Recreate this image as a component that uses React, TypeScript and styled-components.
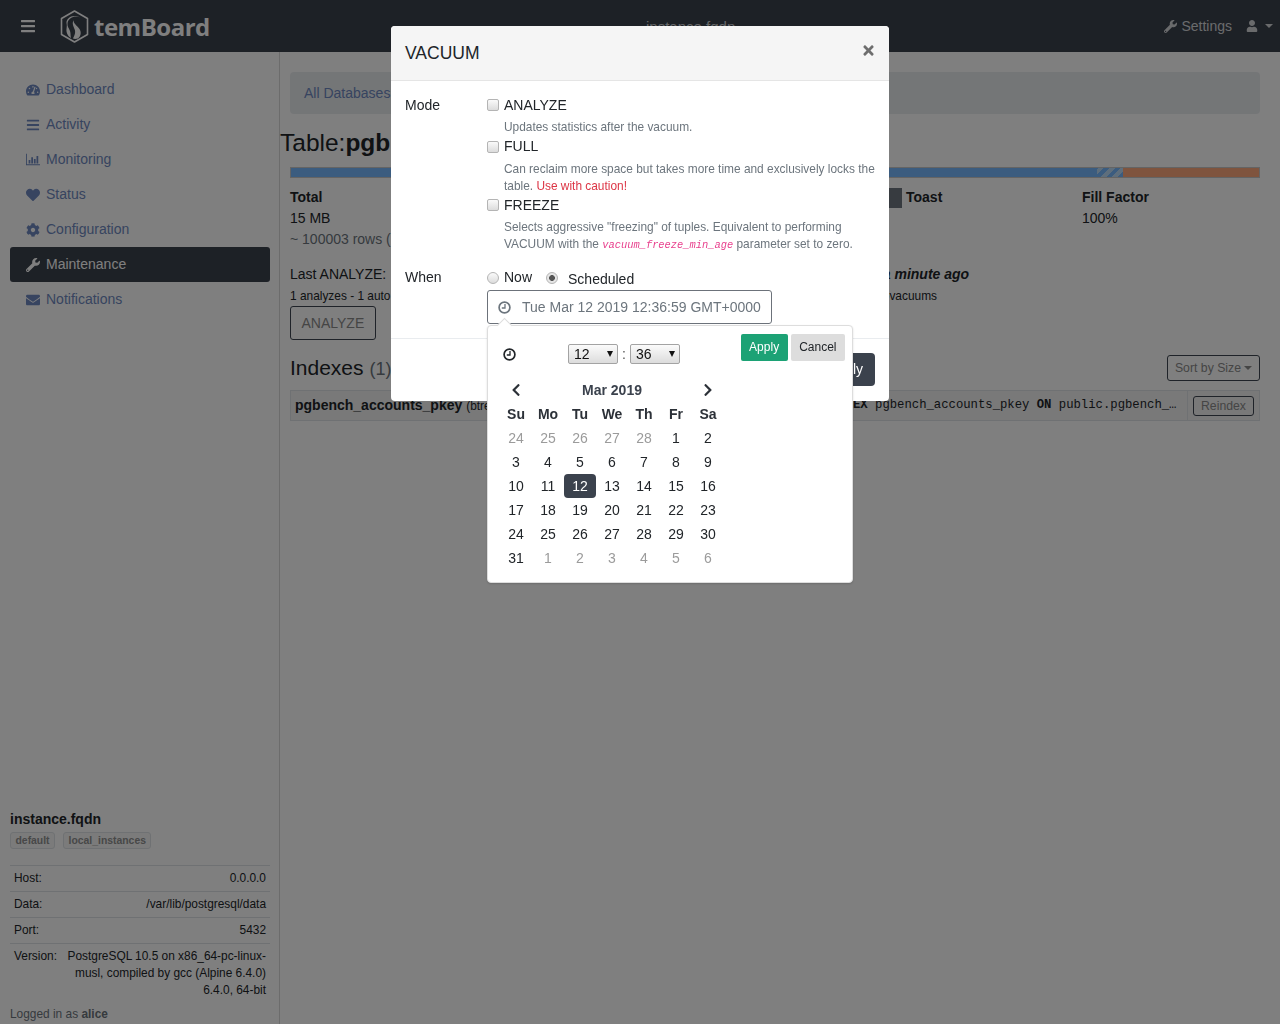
import React from 'react';
import styled, { createGlobalStyle } from 'styled-components';
import {
  FaBars,
  FaChevronLeft,
  FaChevronRight,
  FaCog,
  FaEnvelope,
  FaHeart,
  FaTachometerAlt,
  FaTimes,
  FaUser,
  FaWrench,
} from 'react-icons/fa';

const GlobalStyle = createGlobalStyle`
  html, body {
    margin: 0;
    padding: 0;
    background: #fff;
  }
  body {
    font-family: "Liberation Sans", Arial, sans-serif;
    font-size: 14px;
    line-height: 21px;
    color: #212529;
    overflow: hidden;
  }
  * {
    box-sizing: border-box;
  }
`;

const Page = styled.div`
  width: 1280px;
  height: 1024px;
  overflow: hidden;
  display: flex;
  flex-direction: column;
`;

const TopBar = styled.header`
  flex: 0 0 52px;
  display: flex;
  align-items: center;
  padding: 0 7px 0 20px;
  background: #3b424d;
  color: #fff;
`;

const Burger = styled.span`
  display: flex;
  font-size: 16px;
  width: 40px;
`;

const Brand = styled.span`
  display: flex;
  align-items: center;
  gap: 5px;
  width: 150px;
  font-family: "Open Sans", sans-serif;
  font-weight: 700;
  font-size: 24px;
  letter-spacing: -0.5px;
`;

const BarCenter = styled.span`
  margin-left: 436px;
  font-size: 15px;
  color: #c9ccd0;
`;

const BarRight = styled.div`
  margin-left: auto;
  display: flex;
  align-items: center;
  color: #d4d6d9;
`;

const SettingsLink = styled.span`
  display: flex;
  align-items: center;
  gap: 4px;
  margin-right: 14px;
`;

const Caret = styled.i<{ $tight?: boolean }>`
  display: inline-block;
  width: 0;
  height: 0;
  margin-left: ${(p) => (p.$tight ? '3px' : '7px')};
  border-top: 4px solid currentColor;
  border-left: 4px solid transparent;
  border-right: 4px solid transparent;
`;

const Columns = styled.div`
  flex: 1;
  display: flex;
  min-height: 0;
`;

const Sidebar = styled.aside`
  flex: 0 0 280px;
  display: flex;
  flex-direction: column;
  padding: 20px 9px 0 10px;
  border-right: 1px solid #d8d8d8;
`;

const NavItem = styled.a<{ $active?: boolean }>`
  display: flex;
  align-items: center;
  height: 35px;
  padding-left: 16px;
  border-radius: 3px;
  color: ${(p) => (p.$active ? '#fff' : '#6e88c0')};
  background: ${(p) => (p.$active ? '#3b424d' : 'transparent')};
`;

const NavIcon = styled.span`
  display: flex;
  justify-content: center;
  width: 14px;
  margin-right: 6px;
  font-size: 14px;
`;

const InstanceBlock = styled.div`
  margin-top: auto;
`;

const InstanceName = styled.div`
  font-weight: 700;
`;

const Badges = styled.div`
  display: flex;
  gap: 8px;
  margin: 2px 0 16px;
`;

const Badge = styled.span`
  padding: 0 4.5px;
  height: 17px;
  line-height: 16px;
  border: 1px solid #dee2e6;
  border-radius: 3px;
  font-size: 10.4px;
  font-weight: 700;
  color: #909090;
  background: #f6f6f6;
`;

const InfoRow = styled.div`
  display: flex;
  justify-content: space-between;
  gap: 10px;
  padding: 4px;
  border-top: 1px solid #dee2e6;
  font-size: 11.9px;
  line-height: 17px;
`;

const InfoLabel = styled.span`
  flex: none;
`;

const InfoValue = styled.span`
  text-align: right;
`;

const LoggedIn = styled.div`
  height: 21px;
  padding-top: 2.5px;
  font-size: 11.9px;
  line-height: 17px;
  color: #6c757d;
`;

const Main = styled.main`
  flex: 1;
  min-width: 0;
  padding: 20px 20px 0 10px;
`;

const Crumb = styled.div`
  height: 42px;
  display: flex;
  align-items: center;
  padding: 0 14px;
  border-radius: 4px;
  background: #e9ecef;
  color: #6e88c0;
`;

const Title = styled.h1`
  margin: 14px 0 10px -10px;
  font-size: 24.5px;
  line-height: 29px;
  font-weight: 400;
  white-space: nowrap;
`;

const SizeBar = styled.div`
  display: flex;
  height: 11px;
  border: 1px solid #c8c8c8;
  margin-bottom: 9px;
`;

const BarPart = styled.div<{ $w: number; $kind: 'heap' | 'hatch' | 'toast' }>`
  width: ${(p) => p.$w}px;
  background: ${(p) =>
    p.$kind === 'heap'
      ? '#76b8ff'
      : p.$kind === 'toast'
        ? '#ffa87c'
        : 'repeating-linear-gradient(-45deg, #76b8ff 0 4px, #bcdcf8 4px 8px)'};
`;

const Stats = styled.div`
  display: grid;
  grid-template-columns: repeat(5, 198px);
  margin: 0 -10px 14px;
`;

const Stat = styled.div<{ $col?: number }>`
  grid-column: ${(p) => p.$col ?? 'auto'};
  padding-left: 10px;
`;

const StatHead = styled.div`
  display: flex;
  align-items: center;
  font-weight: 700;
`;

const Swatch = styled.span`
  width: 18px;
  height: 20px;
  margin-right: 4px;
  background: #6f7680;
`;

const Muted = styled.div`
  color: #6c757d;
  white-space: nowrap;
`;

const Maint = styled.div`
  display: grid;
  grid-template-columns: 495px 1fr;
  height: 91px;
`;

const Tiny = styled.div`
  font-size: 11.9px;
  line-height: 17px;
  margin: 3px 0 1px;
`;

const OutlineBtn = styled.span<{ $small?: boolean }>`
  display: inline-flex;
  align-items: center;
  border: 1px solid #3f4652;
  border-radius: 3px;
  color: #8a8a8a;
  height: ${(p) => (p.$small ? '26px' : '34px')};
  padding: 0 ${(p) => (p.$small ? '7px' : '10.5px')};
  font-size: ${(p) => (p.$small ? '12.25px' : '14px')};
`;

const IndexHead = styled.div`
  display: flex;
  align-items: center;
  justify-content: space-between;
  height: 26px;
  margin-bottom: 9px;
`;

const IndexTitle = styled.h2`
  margin: 0;
  font-size: 21px;
  font-weight: 400;
  small {
    color: #6c757d;
    font-size: 18px;
  }
`;

const IndexRow = styled.div`
  display: flex;
  align-items: center;
  height: 31px;
  border: 1px solid #dee2e6;
  background: #f2f2f2;
`;

const IndexName = styled.div`
  flex: 0 0 437px;
  padding-left: 4px;
  font-weight: 700;
  small {
    font-size: 11.9px;
    font-weight: 400;
  }
`;

const IndexCode = styled.code`
  flex: 1;
  min-width: 0;
  overflow: hidden;
  white-space: nowrap;
  text-overflow: ellipsis;
  padding-right: 10px;
  font-family: "Liberation Mono", monospace;
  font-size: 12.25px;
  b {
    font-weight: 700;
  }
`;

const IndexAction = styled.div`
  flex: 0 0 72px;
  height: 100%;
  display: flex;
  align-items: center;
  justify-content: center;
  border-left: 1px solid #dee2e6;
`;

const ReindexBtn = styled(OutlineBtn)`
  height: 20px;
  padding: 1px 7.5px 0;
  line-height: 17px;
`;

const Backdrop = styled.div`
  position: fixed;
  inset: 0;
  background: rgba(0, 0, 0, 0.5);
`;

const Modal = styled.section`
  position: fixed;
  top: 26px;
  left: 391px;
  width: 498px;
  height: 375px;
  display: flex;
  flex-direction: column;
  background: #fff;
  border-radius: 4px;
`;

const ModalHead = styled.div`
  flex: 0 0 55px;
  display: flex;
  align-items: center;
  justify-content: space-between;
  padding: 0 14px;
  background: #f5f5f5;
  border-bottom: 1px solid #e5e5e5;
  border-radius: 4px 4px 0 0;
`;

const ModalTitle = styled.h5`
  margin: 1px 0 0;
  font-size: 17.5px;
  font-weight: 400;
`;

const Close = styled.span`
  display: flex;
  font-size: 15px;
  color: #6e6e6e;
  margin: 0 -1px 6px 0;
`;

const ModalBody = styled.div`
  flex: 1;
  padding: 13.5px 14px 0;
`;

const FormRow = styled.div`
  display: grid;
  grid-template-columns: 82px 1fr;
  margin-bottom: 13px;
`;

const OptionLine = styled.label`
  display: flex;
  align-items: center;
  gap: 5px;
  height: 21px;
`;

const Check = styled.input`
  appearance: none;
  width: 12px;
  height: 12px;
  margin: 0;
  border: 1px solid #b4b4b4;
  border-radius: 2px;
  background: linear-gradient(#fafafa, #dcdcdc);
`;

const Radio = styled.input`
  appearance: none;
  width: 12px;
  height: 12px;
  margin: 0;
  border: 1px solid #b4b4b4;
  border-radius: 50%;
  background: linear-gradient(#fafafa, #dcdcdc);
  &:checked {
    background: radial-gradient(circle, #555 0 2.6px, #e6e6e6 3.2px);
  }
`;

const Help = styled.div`
  margin: 3.5px 0 0 17px;
  font-size: 11.9px;
  line-height: 17px;
  color: #6c757d;
  em {
    font-family: "Liberation Mono", monospace;
    font-size: 10.4px;
    color: #e83e8c;
  }
`;

const Danger = styled.span`
  color: #dc3545;
`;

const WhenLine = styled.div`
  display: flex;
  align-items: center;
`;

const ScheduledLine = styled(OptionLine)`
  margin-left: 14px;
  gap: 10px;
  span {
    position: relative;
    top: 2px;
  }
`;

const PickerField = styled.div`
  position: relative;
  width: 285px;
  margin-top: 2px;
`;

const DateInput = styled.div`
  display: flex;
  align-items: center;
  gap: 11px;
  height: 34px;
  padding-left: 10px;
  border: 1px solid #6c727a;
  border-radius: 3px;
  color: #6c757d;
  white-space: nowrap;
`;

const Picker = styled.div`
  position: absolute;
  top: 35px;
  left: 0;
  width: 366px;
  height: 258px;
  padding: 8px 7px 0 12px;
  background: #fff;
  border: 1px solid #ddd;
  border-radius: 4px;
  box-shadow: 0 1px 2px rgba(0, 0, 0, 0.15);
  &::before {
    content: '';
    position: absolute;
    top: -6px;
    left: 11px;
    width: 10px;
    height: 10px;
    background: #fff;
    border-top: 1px solid #ddd;
    border-left: 1px solid #ddd;
    transform: rotate(45deg);
  }
`;

const PickerTop = styled.div`
  display: flex;
  align-items: flex-start;
  height: 44px;
`;

const TimeGroup = styled.div`
  display: flex;
  align-items: center;
  height: 20px;
  margin: 10px 0 0 3px;
  color: #212529;
`;

const TimeSpacer = styled.span`
  width: 52px;
`;

const SelectWrap = styled.span`
  position: relative;
  display: inline-block;
  width: 50px;
  height: 20px;
  &::after {
    content: '';
    position: absolute;
    top: 7px;
    right: 5px;
    border-top: 6px solid #111;
    border-left: 3.5px solid transparent;
    border-right: 3.5px solid transparent;
    pointer-events: none;
  }
`;

const TimeSelect = styled.select`
  appearance: none;
  display: block;
  width: 100%;
  height: 100%;
  padding: 0 0 0 5px;
  border: 1px solid #a3a3a3;
  border-radius: 2px;
  background: linear-gradient(#fbfbfb, #dcdcdc);
  font-family: "Liberation Sans", Arial, sans-serif;
  font-size: 14px;
  color: #111;
`;

const Colon = styled.span`
  width: 12px;
  text-align: center;
  color: #555;
`;

const PickerButtons = styled.div`
  margin-left: auto;
  display: flex;
  gap: 3px;
`;

const PickerBtn = styled.span<{ $primary?: boolean }>`
  display: flex;
  align-items: center;
  height: 27px;
  padding: 0 8.5px;
  border-radius: 2px;
  font-size: 12px;
  background: ${(p) => (p.$primary ? '#1ca275' : '#ddd')};
  color: ${(p) => (p.$primary ? '#fff' : '#212529')};
`;

const Calendar = styled.div`
  display: grid;
  grid-template-columns: repeat(7, 32px);
  grid-auto-rows: 24px;
  text-align: center;
  line-height: 24px;
`;

const MonthArrow = styled.span`
  display: flex;
  align-items: center;
  justify-content: center;
  font-size: 14px;
  color: #2c3138;
`;

const MonthName = styled.span`
  grid-column: span 5;
  font-weight: 700;
  color: #3b424d;
`;

const WeekDay = styled.span`
  font-weight: 700;
  color: #2c3138;
`;

const Day = styled.span<{ $off?: boolean; $selected?: boolean }>`
  border-radius: 4px;
  color: ${(p) => (p.$selected ? '#fff' : p.$off ? '#9b9b9b' : '#212529')};
  background: ${(p) => (p.$selected ? '#3b424d' : 'transparent')};
`;

const ModalFoot = styled.div`
  flex: 0 0 63px;
  display: flex;
  justify-content: flex-end;
  padding: 14px 14px 0;
  border-top: 1px solid #e9ecef;
`;

const ApplyBtn = styled.span`
  display: flex;
  align-items: center;
  height: 33px;
  padding: 0 12px;
  border-radius: 4px;
  background: #3b424d;
  color: #fff;
`;

const navItems = [
  { label: 'Dashboard', icon: <FaTachometerAlt /> },
  { label: 'Activity', icon: <FaBars /> },
  { label: 'Monitoring', icon: <ChartIcon /> },
  { label: 'Status', icon: <FaHeart /> },
  { label: 'Configuration', icon: <FaCog /> },
  { label: 'Maintenance', icon: <FaWrench />, active: true },
  { label: 'Notifications', icon: <FaEnvelope /> },
];

const weekDays = ['Su', 'Mo', 'Tu', 'We', 'Th', 'Fr', 'Sa'];

// March 2019 with the trailing days of the months around it
const days = [
  ...[24, 25, 26, 27, 28].map((d) => ({ d, off: true })),
  ...Array.from({ length: 31 }, (_, i) => ({ d: i + 1, off: false })),
  ...[1, 2, 3, 4, 5, 6].map((d) => ({ d, off: true })),
];

function ChartIcon() {
  return (
    <svg width="16" height="13" viewBox="0 0 16 13" fill="currentColor">
      <path d="M0 0h1v12h15v1H0z" />
      <path d="M3 7h2v4H3zM6 4h2v7H6zM9 6h2v5H9zM12 2.500h2V11h-2z" />
    </svg>
  );
}

function ClockIcon() {
  return (
    <svg width="13" height="13" viewBox="0 0 13 13" fill="none" stroke="currentColor">
      <circle cx="6.500" cy="6.500" r="5.400" strokeWidth="1.700" />
      <path d="M7 3v4H3.800" strokeWidth="1.300" />
    </svg>
  );
}

function Logo() {
  return (
    <svg width="29" height="33" viewBox="0 0 29 33">
      <path
        d="M14.500 1 27.500 8.500v16l-13 7.500-13-7.500v-16z"
        fill="none"
        stroke="currentColor"
        strokeWidth="1.600"
        strokeLinejoin="round"
      />
      <path
        d="M20 7.500C15 5 8.500 8 7.500 13c-.5 3 1.500 5.500 2.500 8 .8 2.300.3 4.500 1 7-3-1.500-5-5.500-4.500-9 .3-2.500.5-3.500 0-6C6 8 13 3.500 20 7.500z"
        fill="currentColor"
      />
      <path
        d="M14 10c-1.500 3 3 5.500 5.500 9 2 3 1.500 7-1.500 9.500-2 .5-4 .5-5 0 1.500-3 3-6 1.500-9.500C13.500 16 11.500 13 14 10z"
        fill="currentColor"
      />
    </svg>
  );
}

function App() {
  return (
    <>
      <GlobalStyle />
      <Page>
        <TopBar>
          <Burger>
            <FaBars />
          </Burger>
          <Brand>
            <Logo />
            temBoard
          </Brand>
          <BarCenter>instance.fqdn</BarCenter>
          <BarRight>
            <SettingsLink>
              <FaWrench size={13} /> Settings
            </SettingsLink>
            <FaUser size={12} />
            <Caret />
          </BarRight>
        </TopBar>
        <Columns>
          <Sidebar>
            <nav>
              {navItems.map((item) => (
                <NavItem key={item.label} $active={item.active}>
                  <NavIcon>{item.icon}</NavIcon>
                  {item.label}
                </NavItem>
              ))}
            </nav>
            <InstanceBlock>
              <InstanceName>instance.fqdn</InstanceName>
              <Badges>
                <Badge>default</Badge>
                <Badge>local_instances</Badge>
              </Badges>
              <InfoRow>
                <InfoLabel>Host:</InfoLabel>
                <InfoValue>0.0.0.0</InfoValue>
              </InfoRow>
              <InfoRow>
                <InfoLabel>Data:</InfoLabel>
                <InfoValue>/var/lib/postgresql/data</InfoValue>
              </InfoRow>
              <InfoRow>
                <InfoLabel>Port:</InfoLabel>
                <InfoValue>5432</InfoValue>
              </InfoRow>
              <InfoRow>
                <InfoLabel>Version:</InfoLabel>
                <InfoValue>PostgreSQL 10.5 on x86_64-pc-linux-musl, compiled by gcc (Alpine 6.4.0) 6.4.0, 64-bit</InfoValue>
              </InfoRow>
              <LoggedIn>
                Logged in as <b>alice</b>
              </LoggedIn>
            </InstanceBlock>
          </Sidebar>
          <Main>
            <Crumb>All Databases</Crumb>
            <Title>
              Table:<b>pgb</b>
            </Title>
            <SizeBar>
              <BarPart $w={806} $kind="heap" />
              <BarPart $w={26} $kind="hatch" />
              <BarPart $w={136} $kind="toast" />
            </SizeBar>
            <Stats>
              <Stat>
                <StatHead>Total</StatHead>
                <div>15 MB</div>
                <Muted>~ 100003 rows (</Muted>
              </Stat>
              <Stat $col={4}>
                <StatHead>
                  <Swatch />
                  Toast
                </StatHead>
              </Stat>
              <Stat>
                <StatHead>Fill Factor</StatHead>
                <div>100%</div>
              </Stat>
            </Stats>
            <Maint>
              <div>
                <div>Last ANALYZE:</div>
                <Tiny>1 analyzes - 1 auto</Tiny>
                <OutlineBtn>ANALYZE</OutlineBtn>
              </div>
              <div>
                <div>
                  Last VACUUM:{' '}
                  <b>
                    <i>a minute ago</i>
                  </b>
                </div>
                <Tiny>1 vacuums -&nbsp; 1 autovacuums</Tiny>
              </div>
            </Maint>
            <IndexHead>
              <IndexTitle>
                Indexes <small>(1)</small>
              </IndexTitle>
              <OutlineBtn $small>
                Sort by Size
                <Caret $tight />
              </OutlineBtn>
            </IndexHead>
            <IndexRow>
              <IndexName>
                pgbench_accounts_pkey <small>(btree)</small>
              </IndexName>
              <IndexCode>
                <b>CREATE UNIQUE INDEX</b> pgbench_accounts_pkey <b>ON</b> public.pgbench_accounts USING btree (aid)
              </IndexCode>
              <IndexAction>
                <ReindexBtn $small>Reindex</ReindexBtn>
              </IndexAction>
            </IndexRow>
          </Main>
        </Columns>
      </Page>
      <Backdrop />
      <Modal>
        <ModalHead>
          <ModalTitle>VACUUM</ModalTitle>
          <Close>
            <FaTimes />
          </Close>
        </ModalHead>
        <ModalBody>
          <FormRow>
            <span>Mode</span>
            <div>
              <OptionLine>
                <Check type="checkbox" />
                ANALYZE
              </OptionLine>
              <Help>Updates statistics after the vacuum.</Help>
              <OptionLine>
                <Check type="checkbox" />
                FULL
              </OptionLine>
              <Help>
                Can reclaim more space but takes more time and exclusively locks the table.{' '}
                <Danger>Use with caution!</Danger>
              </Help>
              <OptionLine>
                <Check type="checkbox" />
                FREEZE
              </OptionLine>
              <Help>
                Selects aggressive "freezing" of tuples. Equivalent to performing VACUUM with the{' '}
                <em>vacuum_freeze_min_age</em> parameter set to zero.
              </Help>
            </div>
          </FormRow>
          <FormRow>
            <span>When</span>
            <div>
              <WhenLine>
                <OptionLine>
                  <Radio type="radio" name="when" />
                  Now
                </OptionLine>
                <ScheduledLine>
                  <Radio type="radio" name="when" defaultChecked />
                  <span>Scheduled</span>
                </ScheduledLine>
              </WhenLine>
              <PickerField>
                <DateInput>
                  <ClockIcon />
                  Tue Mar 12 2019 12:36:59 GMT+0000
                </DateInput>
                <Picker>
                  <PickerTop>
                    <TimeGroup>
                      <ClockIcon />
                      <TimeSpacer />
                      <SelectWrap>
                        <TimeSelect defaultValue="12">
                          <option>12</option>
                        </TimeSelect>
                      </SelectWrap>
                      <Colon>:</Colon>
                      <SelectWrap>
                        <TimeSelect defaultValue="36">
                          <option>36</option>
                        </TimeSelect>
                      </SelectWrap>
                    </TimeGroup>
                    <PickerButtons>
                      <PickerBtn $primary>Apply</PickerBtn>
                      <PickerBtn>Cancel</PickerBtn>
                    </PickerButtons>
                  </PickerTop>
                  <Calendar>
                    <MonthArrow>
                      <FaChevronLeft />
                    </MonthArrow>
                    <MonthName>Mar 2019</MonthName>
                    <MonthArrow>
                      <FaChevronRight />
                    </MonthArrow>
                    {weekDays.map((w) => (
                      <WeekDay key={w}>{w}</WeekDay>
                    ))}
                    {days.map((day, i) => (
                      <Day key={i} $off={day.off} $selected={!day.off && day.d === 12}>
                        {day.d}
                      </Day>
                    ))}
                  </Calendar>
                </Picker>
              </PickerField>
            </div>
          </FormRow>
        </ModalBody>
        <ModalFoot>
          <ApplyBtn>Apply</ApplyBtn>
        </ModalFoot>
      </Modal>
    </>
  );
}

export default App;
